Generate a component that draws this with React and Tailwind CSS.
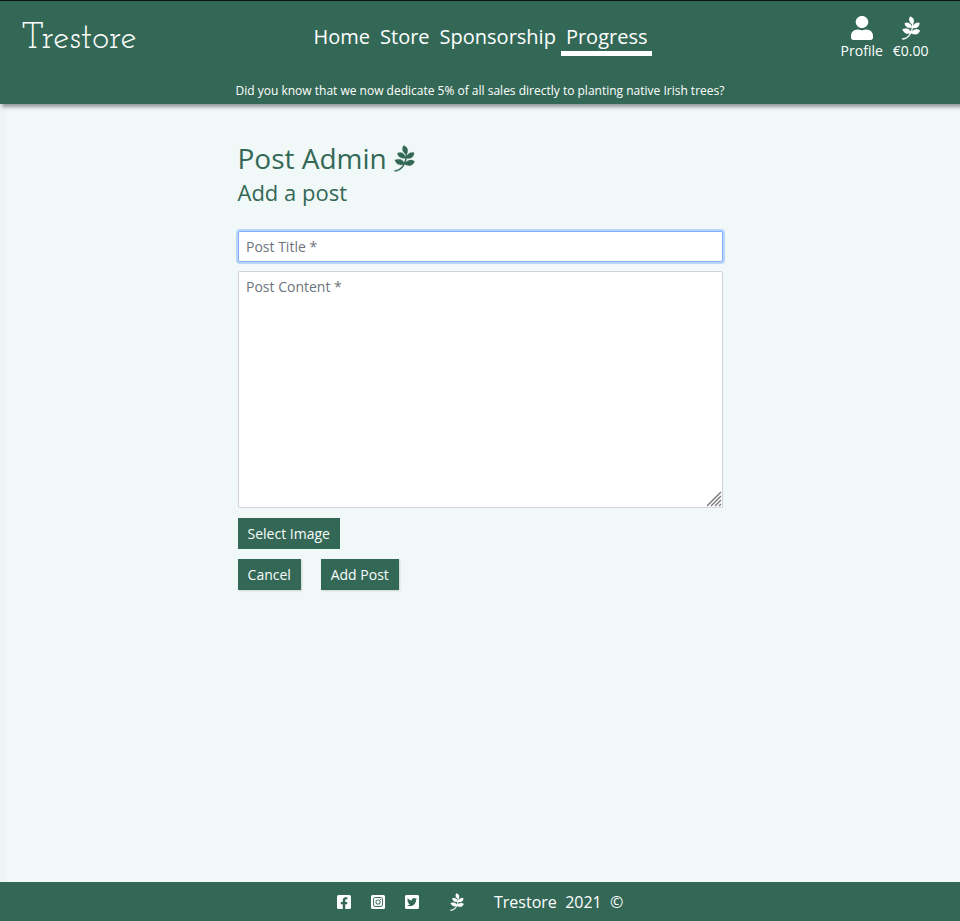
import { FaPagelines, FaUser, FaFacebookSquare, FaInstagramSquare, FaTwitterSquare } from "react-icons/fa";

const button = "h-[31px] bg-[#346856] pr-[6.5px] pl-[6px] text-sm leading-[31px] text-[#f9fdfc]";
const leaf = "overflow-visible stroke-current stroke-[5px]";

export default function App() {
  return (
    <div className="flex h-[921px] w-[960px] flex-col bg-[#f1f8f8] font-['Open_Sans',sans-serif]">
      <header className="relative flex h-[104px] shrink-0 flex-col border-t border-[#0c1411] bg-[#346856] text-white shadow-[3px_2px_4px_1px_rgba(0,0,0,0.4)]">
        <div className="flex h-[76px] items-start">
          <div className="w-[313.5px] pl-[21.5px] pt-[16px] font-['Josefin_Slab','DejaVu_Serif',serif] text-[36px] font-normal leading-[44px]">
            Trestore
          </div>
          <nav className="flex gap-[10px] pt-[22px] text-[20px] leading-[28px]">
            <a>Home</a>
            <a>Store</a>
            <a>Sponsorship</a>
            <a className="-ml-[5px] h-[33px] border-b-[5px] border-white px-[5px]">Progress</a>
          </nav>
          <div className="ml-auto flex gap-[10px] pr-[31.5px] pt-[15px] text-sm leading-[21px]">
            <div className="flex flex-col items-center">
              <FaUser className="mb-px h-[24px] w-[22px]" preserveAspectRatio="none" />
              <span className="-mt-px">Profile</span>
            </div>
            <div className="flex flex-col items-center">
              <FaPagelines className={`h-[24px] w-[22px] ${leaf}`} />
              <span>€0.00</span>
            </div>
          </div>
        </div>
        <p className="pt-[5px] text-center text-[12px] leading-[18px]">
          Did you know that we now dedicate 5% of all sales directly to planting native Irish trees?
        </p>
      </header>
      <main className="flex flex-1 flex-col border-l-[6px] border-[#eef3f3] pl-[232px] pt-[36px] text-[#346856]">
        <h1 className="flex h-[36px] items-center gap-[6px] text-[28px] leading-[36px]">
          <span className="-ml-[0.5px]">Post Admin</span> <FaPagelines className={`-ml-[0.5px] mt-px h-[27px] w-[25px] ${leaf}`} />
        </h1>
        <h2 className="-ml-[0.5px] h-[32px] text-[22px] leading-[32px]">Add a post</h2>
        <div className="mt-[23px] h-[31px] w-[485px] rounded-[2px] border border-[#80b0ff] bg-white px-[7px] text-sm leading-[29px] text-[#6c757d] shadow-[0_0_0_2px_#b9d5fa]">
          Post Title *
        </div>
        <div className="mt-[9px] flex h-[237px] w-[485px] items-start justify-between rounded-[2px] border border-[#ced4da] bg-white pl-[7px] text-sm leading-[29px] text-[#6c757d]">
          Post Content *
          <svg className="self-end" width="15" height="16" viewBox="0 0 15 16" stroke="#777" strokeWidth="1.4">
            <path d="M0 15 14 1M4 15 14 5M8 15l6-6M12 15l2-2" />
          </svg>
        </div>
        <button className={`mt-[10px] w-[102px] ${button}`}>Select Image</button>
        <div className="mt-[10px] flex gap-5">
          <button className={`w-[63px] shadow-[1px_1px_2px_rgba(0,0,0,0.15)] ${button}`}>Cancel</button>
          <button className={`w-[78px] shadow-[1px_1px_2px_rgba(0,0,0,0.15)] ${button}`}>Add Post</button>
        </div>
      </main>
      <footer className="flex h-[39px] shrink-0 items-center bg-[#346856] pl-[336px] text-white">
        <FaFacebookSquare className="mr-[18px] size-4" />
        <FaInstagramSquare className="mr-[18px] size-4" />
        <FaTwitterSquare className="mr-[27.5px] size-4" />
        <FaPagelines className={`mr-[28.5px] mt-px h-[18px] w-[18px] ${leaf}`} />
        <span className="whitespace-pre text-base leading-6">Trestore  2021  ©</span>
      </footer>
    </div>
  );
}
